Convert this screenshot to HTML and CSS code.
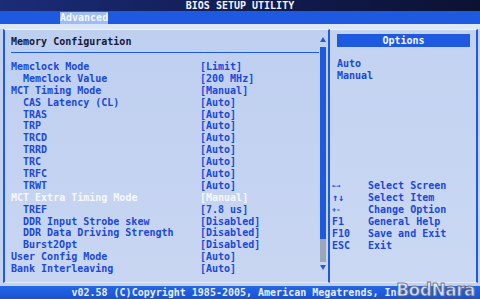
FILE: index.html
```html
<!DOCTYPE html>
<html lang="en">
<head>
  <meta charset="UTF-8" />
  <meta name="viewport" content="width=device-width, initial-scale=1.0" />
  <title>BIOS Setup Utility</title>
  <link rel="stylesheet" href="styles.css">
</head>
<body>
  <div class="bios">
    <div class="titlebar">BIOS SETUP UTILITY</div>
    <div class="tabbar"><span class="tab">Advanced</span></div>

    <div class="main">
      <div class="left">
        <div class="content">
          <div class="heading">Memory Configuration</div>
          <div class="rule"></div>
          <ul class="rows">
            <li><span class="label">Memclock Mode</span><span class="value">[Limit]</span></li>
            <li><span class="label sub">Memclock Value</span><span class="value">[200 MHz]</span></li>
            <li><span class="label">MCT Timing Mode</span><span class="value">[Manual]</span></li>
            <li><span class="label sub">CAS Latency (CL)</span><span class="value">[Auto]</span></li>
            <li><span class="label sub">TRAS</span><span class="value">[Auto]</span></li>
            <li><span class="label sub">TRP</span><span class="value">[Auto]</span></li>
            <li><span class="label sub">TRCD</span><span class="value">[Auto]</span></li>
            <li><span class="label sub">TRRD</span><span class="value">[Auto]</span></li>
            <li><span class="label sub">TRC</span><span class="value">[Auto]</span></li>
            <li><span class="label sub">TRFC</span><span class="value">[Auto]</span></li>
            <li><span class="label sub">TRWT</span><span class="value">[Auto]</span></li>
            <li class="selected"><span class="label">MCT Extra Timing Mode</span><span class="value">[Manual]</span></li>
            <li><span class="label sub">TREF</span><span class="value">[7.8 us]</span></li>
            <li><span class="label sub">DDR Input Strobe skew</span><span class="value">[Disabled]</span></li>
            <li><span class="label sub">DDR Data Driving Strength</span><span class="value">[Disabled]</span></li>
            <li><span class="label sub">Burst2Opt</span><span class="value">[Disabled]</span></li>
            <li><span class="label">User Config Mode</span><span class="value">[Auto]</span></li>
            <li><span class="label">Bank Interleaving</span><span class="value">[Auto]</span></li>
          </ul>
        </div>
        <div class="scroll">
          <div class="arrow up"></div>
          <div class="thumb"></div>
          <div class="track"></div>
          <div class="arrow down"></div>
        </div>
      </div>

      <div class="right">
        <div class="options-title">Options</div>
        <ul class="options">
          <li>Auto</li>
          <li>Manual</li>
        </ul>
        <ul class="keys">
          <li><span class="key small">&larr;&rarr;</span><span>Select Screen</span></li>
          <li><span class="key">&uarr;&darr;</span><span>Select Item</span></li>
          <li><span class="key small">+-</span><span>Change Option</span></li>
          <li><span class="key">F1</span><span>General Help</span></li>
          <li><span class="key">F10</span><span>Save and Exit</span></li>
          <li><span class="key">ESC</span><span>Exit</span></li>
        </ul>
      </div>
    </div>

    <div class="footer">v02.58 (C)Copyright 1985-2005, American Megatrends, Inc.</div>
    <div class="watermark">BodNara</div>
  </div>
</body>
</html>
```

FILE: styles.css
```css
:root {
  --navy: #131f58;
  --blue: #1e5ae0;
  --ink: #1a48dc;
  --panel: #c2d2f0;
  --light: #dbe6f8;
  --grey: #9aa6bc;
}
* {
  box-sizing: border-box;
}
body {
  margin: 0;
  width: 480px;
  height: 299px;
  overflow: hidden;
  font-family: "DejaVu Sans Mono", "Liberation Mono", monospace;
  font-weight: bold;
  font-size: 10px;
  color: var(--ink);
  background: var(--panel);
}
ul {
  list-style: none;
  margin: 0;
  padding: 0;
}
.bios {
  position: relative;
  width: 480px;
  height: 299px;
  display: flex;
  flex-direction: column;
}
.titlebar {
  height: 11px;
  line-height: 11px;
  text-align: center;
  color: #f2f4ff;
  background: linear-gradient(90deg, #1b2c78, #101a4c 60%, #0c1232);
}
.tabbar {
  height: 13px;
  padding-left: 60px;
  background: var(--blue);
}
.tab {
  display: inline-block;
  height: 12px;
  margin-top: 1px;
  width: 48px;
  line-height: 12px;
  color: #f4f7ff;
  background: #9fbdf2;
}
.main {
  flex: 1;
  display: flex;
  padding: 5px 2px 3px 3px;
  background: linear-gradient(180deg, var(--light) 0, var(--light) 5px, var(--panel) 5px);
}
.left {
  width: 327px;
  display: flex;
  border-left: 2px solid var(--blue);
  border-right: 2px solid var(--blue);
  border-top: 1px solid #eef3fd;
  border-bottom: 1px solid #e2eaf9;
  background: linear-gradient(180deg, #bfcff0, #c8d6f2);
}
.content {
  flex: 1;
  padding: 6px 0 0 6px;
}
.heading {
  height: 12px;
  line-height: 12px;
  color: #141a3a;
}
.rule {
  height: 1px;
  margin: 4px 0 8px 0;
  background: var(--blue);
}
.rows li {
  display: flex;
  height: 11.9px;
  line-height: 11.9px;
  white-space: pre;
}
.label {
  width: 189px;
}
.label.sub {
  padding-left: 12px;
}
.selected {
  color: #f6f8ff;
}
.scroll {
  width: 7px;
  margin: 7px 2px 12px 0;
  display: flex;
  flex-direction: column;
  align-items: center;
}
.arrow {
  width: 0;
  height: 0;
  border-left: 3px solid transparent;
  border-right: 3px solid transparent;
}
.arrow.up {
  border-bottom: 5px solid var(--blue);
  margin-bottom: 5px;
}
.arrow.down {
  border-top: 5px solid var(--blue);
  margin-top: 3px;
}
.thumb {
  width: 6px;
  height: 192px;
  background: var(--blue);
}
.track {
  width: 6px;
  flex: 1;
  background: var(--grey);
}
.right {
  flex: 1;
  display: flex;
  flex-direction: column;
  padding-left: 2px;
  border-right: 2px solid var(--blue);
  border-top: 1px solid #eef3fd;
  border-bottom: 1px solid #e2eaf9;
  background: linear-gradient(180deg, #c2d2f0, #cad8f3);
}
.options-title {
  margin: 4px 0 0 5px;
  width: 133px;
  height: 13px;
  line-height: 13px;
  text-align: center;
  color: #f2f6ff;
  background: var(--blue);
}
.options {
  margin-top: 11px;
  padding-left: 5px;
}
.options li,
.keys li {
  height: 12px;
  line-height: 12px;
}
.keys {
  margin-top: 98px;
}
.keys li {
  display: flex;
}
.key {
  width: 36px;
}
.key.small {
  font-size: 7px;
}
.footer {
  height: 13px;
  line-height: 13px;
  text-align: center;
  color: #e6ecff;
  background: linear-gradient(180deg, #2466e6, #1a52d2);
}
.watermark {
  position: absolute;
  right: 5px;
  bottom: 0;
  height: 17px;
  line-height: 17px;
  font-family: "DejaVu Sans", sans-serif;
  font-size: 17px;
  font-weight: bold;
  letter-spacing: -0.5px;
  color: rgba(240, 242, 250, 0.85);
  -webkit-text-stroke: 1px rgba(90, 96, 120, 0.8);
}
```
